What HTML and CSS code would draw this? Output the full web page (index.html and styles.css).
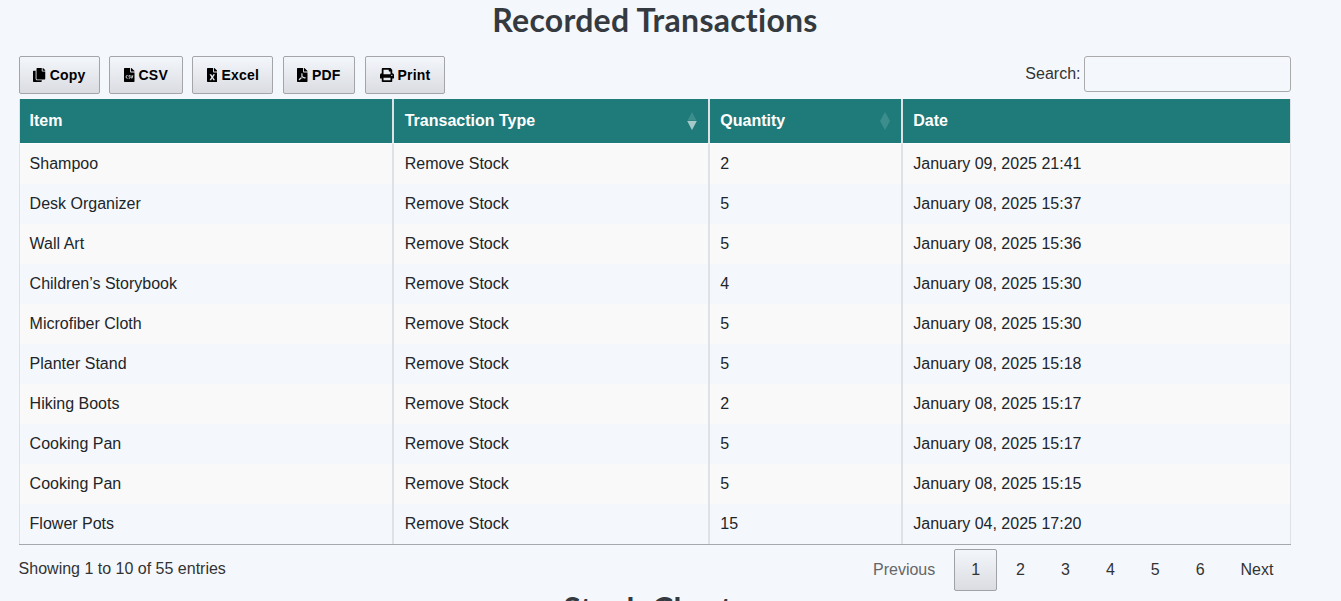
FILE: index.html
```html
<!DOCTYPE html>
<html lang="en">
<head>
<meta charset="utf-8">
<title>Recorded Transactions</title>
<link rel="stylesheet" href="styles.css">
</head>
<body>
<main class="page">
  <h2 class="title">Recorded Transactions</h2>
  <div class="toolbar">
    <div class="buttons">
      <button class="btn btn-copy"><svg class="icon" viewBox="0 0 448 512"><path d="M320 448v40c0 13.255-10.745 24-24 24H24c-13.255 0-24-10.745-24-24V120c0-13.255 10.745-24 24-24h72v296c0 30.879 25.121 56 56 56h168zm0-344V0H152c-13.255 0-24 10.745-24 24v368c0 13.255 10.745 24 24 24h272c13.255 0 24-10.745 24-24V128H344c-13.2 0-24-10.8-24-24zm120.971-31.029L375.029 7.029A24 24 0 0 0 358.059 0H352v96h96v-6.059a24 24 0 0 0-7.029-16.97z"/></svg><span>Copy</span></button>
      <button class="btn btn-csv"><svg class="icon" viewBox="0 0 384 512"><path d="M224 136V0H24C10.700 0 0 10.700 0 24v464c0 13.300 10.700 24 24 24h336c13.300 0 24-10.700 24-24V160H248c-13.200 0-24-10.800-24-24zM384 121.900v6.100H256V0h6.100c6.400 0 12.500 2.500 17 7l97.900 98c4.500 4.500 7 10.600 7 16.900z"/><path class="mark" d="M132 275h-18q-34 0-34 35v30q0 35 34 35h18M222 275h-24c-32 0-32 40-6 48l18 6c26 10 22 46-8 46h-30M254 264v24c0 40 12 62 32 88 20-26 32-48 32-88v-24"/></svg><span>CSV</span></button>
      <button class="btn btn-excel"><svg class="icon" viewBox="0 0 384 512"><path d="M224 136V0H24C10.700 0 0 10.700 0 24v464c0 13.300 10.700 24 24 24h336c13.300 0 24-10.700 24-24V160H248c-13.200 0-24-10.800-24-24zm60.100 106.500L224 336l60.100 93.500c5.100 8-.6 18.500-10.100 18.500h-34.900c-4.400 0-8.500-2.400-10.600-6.300C208.900 405.500 192 373 192 373c-6.400 14.800-10 20-36.600 68.800-2.100 3.900-6.100 6.300-10.500 6.300H110c-9.500 0-15.200-10.500-10.100-18.500l60.300-93.500-60.300-93.500c-5.200-8 .6-18.500 10.100-18.500h34.800c4.400 0 8.500 2.400 10.600 6.300 26.100 48.800 20 33.600 36.600 68.500 0 0 6.100-11.700 36.600-68.500 2.100-3.900 6.200-6.300 10.600-6.300H274c9.500-.1 15.200 10.400 10.100 18.400zM384 121.900v6.100H256V0h6.100c6.400 0 12.500 2.500 17 7l97.900 98c4.500 4.500 7 10.600 7 16.900z"/></svg><span>Excel</span></button>
      <button class="btn btn-pdf"><svg class="icon" viewBox="0 0 384 512"><path d="M181.900 256.100c-5-16-4.900-46.900-2-46.900 8.400 0 7.600 36.900 2 46.900zm-1.700 47.200c-7.700 20.200-17.300 43.300-28.400 62.700 18.300-7 39-17.200 62.900-21.900-12.700-9.600-24.900-23.400-34.500-40.800zM86.100 428.100c0 .8 13.200-5.400 34.900-40.200-6.700 6.300-29.100 24.500-34.900 40.200zM248 160h136v328c0 13.300-10.700 24-24 24H24c-13.300 0-24-10.700-24-24V24C0 10.700 10.700 0 24 0h200v136c0 13.200 10.800 24 24 24zm-8 171.800c-20-12.200-33.300-29-42.700-53.800 4.500-18.500 11.600-46.600 6.200-64.200-4.700-29.400-42.400-26.500-47.800-6.800-5 18.300-.4 44.100 8.100 77-11.600 27.600-28.700 64.600-40.800 85.800-.1 0-.1.100-.2.100-27.100 13.900-73.600 44.500-54.500 68 5.600 6.900 16 10 21.500 10 17.900 0 35.700-18 61.100-61.800 25.800-8.500 54.100-19.100 79-23.200 21.700 11.800 47.100 19.500 64 19.500 29.200 0 31.200-32 19.700-43.400-13.900-13.600-54.300-9.700-73.600-7.200zM377 105L279 7c-4.500-4.500-10.600-7-17-7h-6v128h128v-6.100c0-6.300-2.500-12.400-7-16.900zm-74.100 255.300c4.100-2.700-2.500-11.900-42.800-9 37.100 15.800 42.800 9 42.800 9z"/></svg><span>PDF</span></button>
      <button class="btn btn-print"><svg class="icon" viewBox="0 0 512 512"><path d="M448 192V77.250c0-8.490-3.370-16.620-9.370-22.630L393.370 9.370c-6-6-14.140-9.370-22.630-9.370H96C78.330 0 64 14.330 64 32v160c-35.350 0-64 28.650-64 64v112c0 8.840 7.160 16 16 16h48v96c0 17.670 14.330 32 32 32h320c17.670 0 32-14.330 32-32v-96h48c8.840 0 16-7.160 16-16V256c0-35.350-28.650-64-64-64zm-64 256H128v-96h256v96zm0-224H128V64h192v48c0 8.840 7.160 16 16 16h48v96zm48 72c-13.250 0-24-10.750-24-24 0-13.260 10.750-24 24-24s24 10.740 24 24c0 13.250-10.750 24-24 24z"/></svg><span>Print</span></button>
    </div>
    <label class="search">Search:<input type="search" class="search-input"></label>
  </div>
  <table class="table">
    <colgroup><col class="col-item"><col class="col-type"><col class="col-qty"><col class="col-date"></colgroup>
    <thead>
      <tr>
        <th>Item</th>
        <th><div class="head">Transaction Type<svg class="sort" viewBox="0 0 10 18"><path class="dim" d="M5 0l4.500 8.500h-9z"/><path class="lit" d="M.2 9h9.600L5 18z"/></svg></div></th>
        <th><div class="head">Quantity<svg class="sort" viewBox="0 0 10 18"><path class="dim" d="M5 0l5 9-5 9-5-9z"/></svg></div></th>
        <th>Date</th>
      </tr>
    </thead>
    <tbody>
      <tr><td>Shampoo</td><td>Remove Stock</td><td>2</td><td>January 09, 2025 21:41</td></tr>
      <tr><td>Desk Organizer</td><td>Remove Stock</td><td>5</td><td>January 08, 2025 15:37</td></tr>
      <tr><td>Wall Art</td><td>Remove Stock</td><td>5</td><td>January 08, 2025 15:36</td></tr>
      <tr><td>Children’s Storybook</td><td>Remove Stock</td><td>4</td><td>January 08, 2025 15:30</td></tr>
      <tr><td>Microfiber Cloth</td><td>Remove Stock</td><td>5</td><td>January 08, 2025 15:30</td></tr>
      <tr><td>Planter Stand</td><td>Remove Stock</td><td>5</td><td>January 08, 2025 15:18</td></tr>
      <tr><td>Hiking Boots</td><td>Remove Stock</td><td>2</td><td>January 08, 2025 15:17</td></tr>
      <tr><td>Cooking Pan</td><td>Remove Stock</td><td>5</td><td>January 08, 2025 15:17</td></tr>
      <tr><td>Cooking Pan</td><td>Remove Stock</td><td>5</td><td>January 08, 2025 15:15</td></tr>
      <tr><td>Flower Pots</td><td>Remove Stock</td><td>15</td><td>January 04, 2025 17:20</td></tr>
    </tbody>
  </table>
  <div class="footer">
    <div class="info">Showing 1 to 10 of 55 entries</div>
    <nav class="pager">
      <a class="page-link disabled">Previous</a>
      <a class="page-link current">1</a>
      <a class="page-link">2</a>
      <a class="page-link">3</a>
      <a class="page-link">4</a>
      <a class="page-link">5</a>
      <a class="page-link">6</a>
      <a class="page-link">Next</a>
    </nav>
  </div>
  <h2 class="title next-title">Stock Charts</h2>
</main>
</body>
</html>
```
FILE: styles.css
```css
* { box-sizing: border-box; }
html { overflow: hidden; }
body {
  margin: 0;
  height: 601px;
  overflow: hidden;
  background: #f4f8fd;
  color: #333;
  font: 16px/24px "Liberation Sans", Arial, sans-serif;
}
.page { width: 1272px; margin-left: 19px; }
.title {
  margin: 0;
  height: 56px;
  padding-top: 1px;
  text-align: center;
  font: 700 32px/38px Lato, sans-serif;
  letter-spacing: 0.25px;
  color: #343a40;
}
.toolbar { display: flex; justify-content: space-between; height: 43px; }
.buttons { display: flex; }
.btn {
  display: flex;
  align-items: center;
  justify-content: center;
  gap: 4px;
  height: 38px;
  padding: 0;
  border: 1px solid #a3a5a8;
  border-radius: 2px;
  background: linear-gradient(#f3f6fb, #dadce1);
  color: #000;
  font: 700 14px/20px "Liberation Sans", Arial, sans-serif;
  letter-spacing: 0.2px;
}
.icon { height: 14px; flex: none; }
.mark { fill: none; stroke: #e7eaee; stroke-width: 34; }
.btn-copy { width: 81px; margin-right: 9px; }
.btn-csv { width: 74px; margin-right: 9px; }
.btn-excel { width: 81px; margin-right: 10px; padding-left: 1px; }
.btn-pdf { width: 72px; margin-right: 10px; }
.btn-print { width: 80px; }
.search { display: flex; gap: 3.5px; line-height: 35px; }
.search-input {
  width: 207px;
  height: 36px;
  margin: 0;
  border: 1px solid #aaa;
  border-radius: 3px;
  background: transparent;
}
.table {
  width: 1272px;
  table-layout: fixed;
  border-collapse: separate;
  border-spacing: 0;
  border-bottom: 1px solid #a5a9ad;
  color: #212529;
}
.col-item { width: 374px; }
.col-type { width: 316px; }
.col-qty { width: 193px; }
.col-date { width: 389px; }
th {
  height: 45px;
  padding: 0 10px 1px;
  border: solid #dee2e6;
  border-width: 0 1px;
  border-bottom: 1px solid #fdfdfe;
  background: #1f7a7a;
  background-clip: padding-box;
  color: #fff;
  text-align: left;
}
.head { display: flex; justify-content: space-between; align-items: center; }
.sort { width: 10px; height: 18px; margin: 0 1px 0 0; }
.dim { fill: #3c8e8c; }
.lit { fill: #a5cac9; }
td {
  height: 40px;
  padding: 0 10px 1px;
  border: solid #dee2e6;
  border-width: 0 1px;
}
th:first-child, td:first-child { padding-left: 9.6px; }
th:nth-child(2), td:nth-child(2) { padding-left: 10.7px; }
th:nth-child(3), td:nth-child(3),
th:nth-child(4), td:nth-child(4) { padding-left: 10.3px; }
tbody tr:nth-child(odd) { background: #f9f9f9; }
.footer { display: flex; justify-content: space-between; height: 44px; padding-top: 4px; }
.info { padding-top: 8px; margin-left: -0.4px; }
.pager { display: flex; gap: 1.9px; margin-right: 0.6px; }
.page-link {
  height: 42px;
  min-width: 43px;
  padding: 0 16px;
  border: 1px solid transparent;
  border-radius: 2px;
  line-height: 40px;
  text-align: center;
}
.disabled { color: #666; }
.current { border-color: #a0a2a5; background: linear-gradient(#f3f6fb, #dadce1); }
```
